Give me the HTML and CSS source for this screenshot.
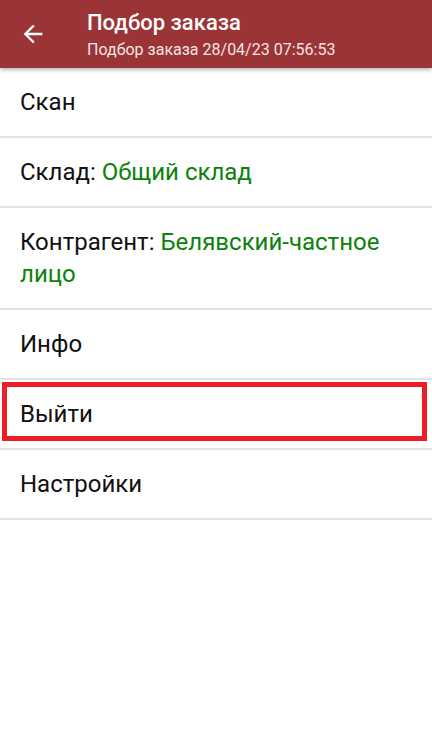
FILE: index.html
```html
<!DOCTYPE html>
<html lang="ru">
  <head>
    <meta charset="UTF-8" />
    <title>Подбор заказа</title>
    <link rel="stylesheet" href="styles.css">
  </head>
  <body>
    <header class="toolbar">
      <button class="back" aria-label="Назад">
        <svg viewBox="0 0 24 24" width="28" height="28">
          <path d="M20 11H7.83l5.59-5.59L12 4l-8 8 8 8 1.41-1.41L7.83 13H20v-2z" fill="#fff" />
        </svg>
      </button>
      <div class="titles">
        <h1>Подбор заказа</h1>
        <p>Подбор заказа 28/04/23 07:56:53</p>
      </div>
    </header>

    <ul class="menu">
      <li>Скан</li>
      <li>Склад: <span class="value">Общий склад</span></li>
      <li>Контрагент: <span class="value">Белявский-частное лицо</span></li>
      <li>Инфо</li>
      <li class="marked">Выйти</li>
      <li>Настройки</li>
    </ul>
  </body>
</html>
```

FILE: styles.css
```css
body {
  margin: 0;
  font-family: Roboto, "Liberation Sans", sans-serif;
  background: #fff;
  color: #111;
}

.toolbar {
  display: flex;
  align-items: center;
  height: 68px;
  background-color: #9b3436;
  color: white;
  box-shadow: 0 2px 4px rgba(0, 0, 0, 0.28);
  position: relative;
  z-index: 1;
}

.back {
  display: flex;
  align-items: center;
  justify-content: center;
  width: 28px;
  height: 28px;
  margin: 0 40px 0 19px;
  padding: 0;
  border: none;
  background: none;
}

.titles h1 {
  margin: 0;
  font-size: 22px;
  font-weight: 500;
  line-height: 28px;
}

.titles p {
  margin: 3px 0 0;
  font-size: 16px;
  line-height: 20px;
  color: #f3e4e4;
}

.menu {
  list-style: none;
  margin: 0;
  padding: 0;
}

.menu li {
  position: relative;
  padding: 18px 20px;
  font-size: 24px;
  line-height: 32px;
  border-bottom: 2px solid #e2e2e2;
}

.value {
  color: #0a820a;
}

.marked::after {
  content: "";
  position: absolute;
  top: 2px;
  left: 2px;
  right: 5px;
  bottom: 7px;
  border: 5px solid #ee1c25;
}
```
